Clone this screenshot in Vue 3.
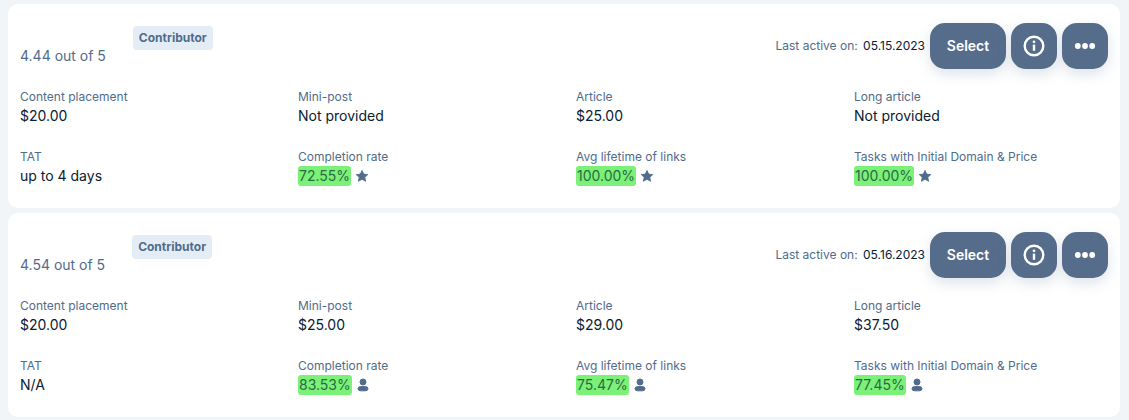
<script setup>
const labels = ['Content placement', 'Mini-post', 'Article', 'Long article', 'TAT', 'Completion rate', 'Avg lifetime of links', 'Tasks with Initial Domain & Price']
const makeItems = values => labels.map((label, i) => ({ label, value: values[i], rated: i > 4 }))
const cards = [
  { rating: '4.44 out of 5', date: '05.15.2023', icon: 'star', items: makeItems(['$20.00', 'Not provided', '$25.00', 'Not provided', 'up to 4 days', '72.55%', '100.00%', '100.00%']) },
  { rating: '4.54 out of 5', date: '05.16.2023', icon: 'person', items: makeItems(['$20.00', '$25.00', '$29.00', '$37.50', 'N/A', '83.53%', '75.47%', '77.45%']) }
]
</script>

<template>
  <main class="list">
    <article v-for="card in cards" :key="card.date" class="card">
      <header class="head">
        <span class="rating">{{ card.rating }}</span>
        <span class="badge">Contributor</span>
        <div class="actions">
          <span class="active">Last active on: <time>{{ card.date }}</time></span>
          <button type="button" class="btn select">Select</button>
          <button type="button" class="btn" aria-label="Information">
            <svg width="22" height="22" viewBox="0 0 22 22" fill="none" stroke="#fff" stroke-width="2.4"><circle cx="11" cy="11" r="9.3" /><path d="M11 9.6v6.2" /><circle cx="11" cy="6.8" r="1.4" fill="#fff" stroke="none" /></svg>
          </button>
          <button type="button" class="btn" aria-label="More actions">
            <svg width="22" height="22" viewBox="0 0 22 22" fill="#fff"><circle cx="3.8" cy="11" r="2.9" /><circle cx="11" cy="11" r="2.9" /><circle cx="18.2" cy="11" r="2.9" /></svg>
          </button>
        </div>
      </header>
      <dl class="grid">
        <div v-for="item in card.items" :key="item.label">
          <dt>{{ item.label }}</dt>
          <dd>
            <template v-if="item.rated">
              <mark>{{ item.value }}</mark>
              <svg v-if="card.icon === 'star'" class="icon" viewBox="0 0 14 14"><path stroke-width=".8" stroke-linejoin="round" d="M7 1.4l1.7 3.7 4.1.5-3 2.7.8 4L7 10.3l-3.6 2 .8-4-3-2.7 4.1-.5z" /></svg>
              <svg v-else class="icon" viewBox="0 0 14 14" stroke="none"><circle cx="7" cy="4" r="3" /><rect x="2" y="8.6" width="10" height="4.2" rx="2.6" ry="2.1" /></svg>
            </template>
            <template v-else>{{ item.value }}</template>
          </dd>
        </div>
      </dl>
    </article>
  </main>
</template>

<style>
body { background: #f1f5f8; }
</style>
<style scoped>
.list { display: flex; flex-direction: column; gap: 5px; padding: 4px 9px 4px 8px; font-family: Inter, "Liberation Sans", sans-serif; color: #516b8b; }
.card { box-sizing: border-box; padding: 19px 12px 22px; border-radius: 10px; background: #fff; }
.head { display: flex; align-items: flex-start; }
.rating { padding-top: 23px; font-size: 14px; line-height: 20px; }
.badge { margin: 3px 0 0 27px; padding: 0 6px; border-radius: 4px; background: #e4edf5; font-size: 12px; font-weight: 700; line-height: 24px; }
.actions { display: flex; align-items: center; gap: 5px; margin-left: auto; }
.active { font-size: 12px; line-height: 16px; }
time { margin-left: 2px; color: #082032; }
.btn { display: flex; align-items: center; justify-content: center; width: 46px; height: 46px; padding: 0; border: 0; border-radius: 15px; background: #566c8b; color: #fff; box-shadow: 0 5px 14px #566c8b33; }
.select { width: 76px; font: 600 14px/20px Inter, "Liberation Sans", sans-serif; }
.grid { display: grid; grid-template-columns: repeat(4, 1fr); row-gap: 22px; margin: 19px -24px 0 0; }
dt { font-size: 12px; line-height: 18px; white-space: nowrap; }
dd { display: flex; align-items: center; margin: 0; color: #082032; font-size: 14px; line-height: 20px; }
mark { padding: 0 1px; border-radius: 3px; background: #7bf178; color: #2a6b45; }
.icon { width: 14px; height: 14px; margin-left: 4px; fill: #516b8b; stroke: #516b8b; }
</style>
